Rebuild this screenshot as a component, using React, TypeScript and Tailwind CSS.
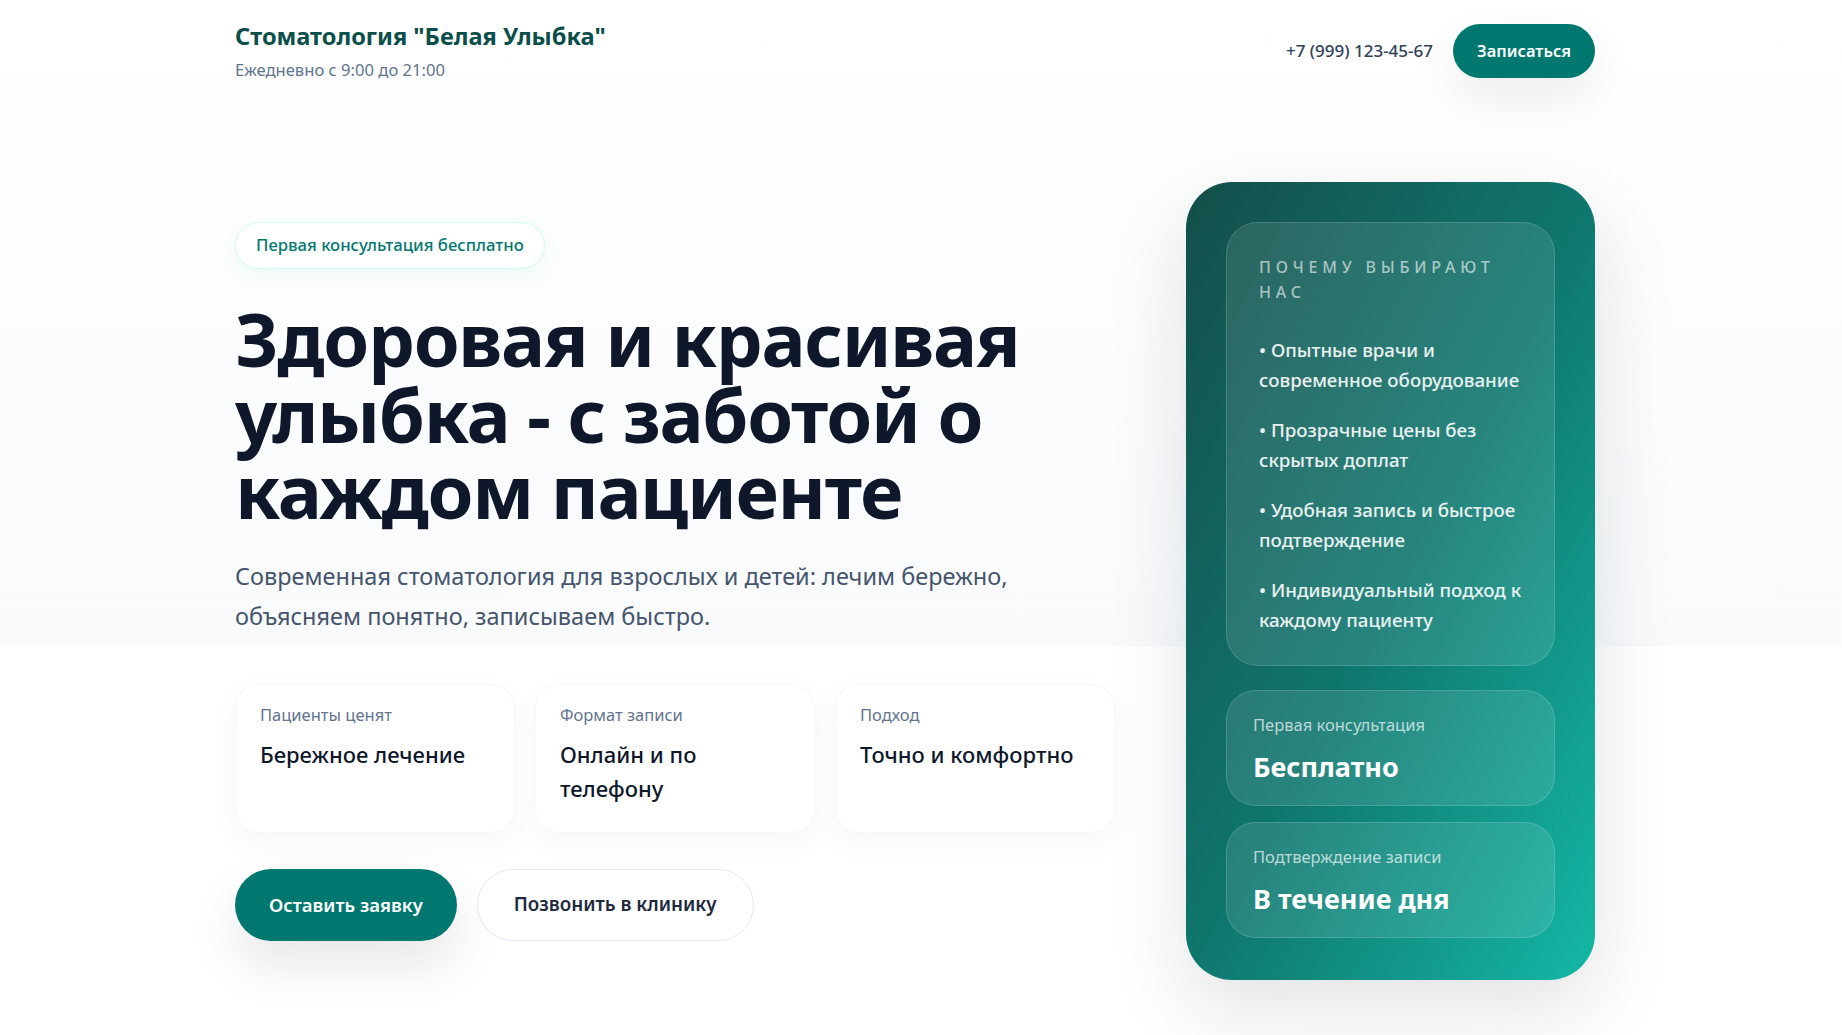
import React from "react";

const bullets = [
  "• Опытные врачи и современное оборудование",
  "• Прозрачные цены без скрытых доплат",
  "• Удобная запись и быстрое подтверждение",
  "• Индивидуальный подход к каждому пациенту",
];

const stats = [
  { label: "Пациенты ценят", value: "Бережное лечение" },
  { label: "Формат записи", value: "Онлайн и по телефону" },
  { label: "Подход", value: "Точно и комфортно" },
];

export default function App() {
  return (
    <div className="min-h-screen bg-[linear-gradient(180deg,#ffffff_0px,#f8fafc_647px,#ffffff_647px)] pb-14 pr-3 font-['Noto_Sans','Open_Sans',sans-serif] text-slate-900">
      <header className="mx-auto flex max-w-[1360px] items-center justify-between pt-5">
        <div>
          <div className="text-[23.6px] font-bold leading-8 text-teal-900">
            Стоматология "Белая Улыбка"
          </div>
          <div className="mt-1.5 text-[16.6px] leading-6 text-slate-500">
            Ежедневно с 9:00 до 21:00
          </div>
        </div>
        <div className="flex items-center gap-5">
          <span className="text-[17px] font-medium text-slate-700">+7 (999) 123-45-67</span>
          <button className="h-[54px] rounded-full bg-teal-700 px-6 text-[16.5px] font-semibold text-white shadow-[0_20px_45px_rgba(15,23,42,0.08)]">
            Записаться
          </button>
        </div>
      </header>

      <main className="mx-auto flex max-w-[1360px] items-center gap-[71px] pt-[100px]">
        <section className="min-w-0 flex-1">
          <div className="inline-flex h-[47px] items-center rounded-full border border-teal-100 bg-white px-5 text-[16.7px] font-medium text-teal-700 shadow-[0_6px_18px_rgba(20,184,166,0.06)]">
            Первая консультация бесплатно
          </div>
          <h1 className="mt-8 text-[74px] font-bold leading-[76px] tracking-[-0.018em] text-slate-900">
            Здоровая и красивая улыбка - с заботой о каждом пациенте
          </h1>
          <p className="mt-[27px] text-[23.5px] leading-10 text-slate-600">
            Современная стоматология для взрослых и детей: лечим бережно, объясняем понятно, записываем быстро.
          </p>
          <div className="mt-12 grid grid-cols-3 gap-5">
            {stats.map((s) => (
              <div
                key={s.label}
                className="rounded-3xl border border-slate-100/70 bg-white px-6 pb-[27px] pt-[18px] shadow-[0_10px_30px_rgba(15,23,42,0.04)]"
              >
                <div className="text-[16.5px] leading-6 text-slate-500">{s.label}</div>
                <div className="mt-[10px] text-[22px] font-medium leading-[34px] text-slate-900">{s.value}</div>
              </div>
            ))}
          </div>
          <div className="mt-9 flex gap-5">
            <button className="h-[72px] rounded-full bg-teal-700 px-[34px] text-[18.5px] font-semibold text-white shadow-[0_24px_50px_rgba(15,23,42,0.10)]">
              Оставить заявку
            </button>
            <button className="h-[72px] rounded-full border border-slate-200 bg-white px-9 text-[18.8px] font-semibold text-slate-800">
              Позвонить в клинику
            </button>
          </div>
        </section>

        <aside className="w-[409px] shrink-0 rounded-[46px] bg-gradient-to-br from-[#134e4a] via-[#0f766e] to-[#14b8a6] px-10 pb-[42px] pt-10 shadow-[0_30px_80px_rgba(15,23,42,0.12)]">
          <div className="rounded-[32px] border border-white/15 bg-white/10 px-8 pb-[30px] pt-8">
            <div className="text-base font-medium uppercase leading-[25px] tracking-[0.3em] text-white/60">
              Почему выбирают нас
            </div>
            <ul className="mt-[30px] space-y-5">
              {bullets.map((b) => (
                <li key={b} className="text-[18.7px] font-medium leading-[30px] text-white/90">
                  {b}
                </li>
              ))}
            </ul>
          </div>
          <div className="mt-6 grid gap-4">
            <div className="rounded-[30px] border border-white/15 bg-white/10 px-[26px] pb-5 pt-[22px]">
              <div className="text-[16.5px] leading-6 text-white/70">Первая консультация</div>
              <div className="mt-3 text-[27px] font-bold leading-9 text-white">Бесплатно</div>
            </div>
            <div className="rounded-[30px] border border-white/15 bg-white/10 px-[26px] pb-5 pt-[22px]">
              <div className="text-[16.5px] leading-6 text-white/70">Подтверждение записи</div>
              <div className="mt-3 text-[27px] font-bold leading-9 text-white">В течение дня</div>
            </div>
          </div>
        </aside>
      </main>
    </div>
  );
}
